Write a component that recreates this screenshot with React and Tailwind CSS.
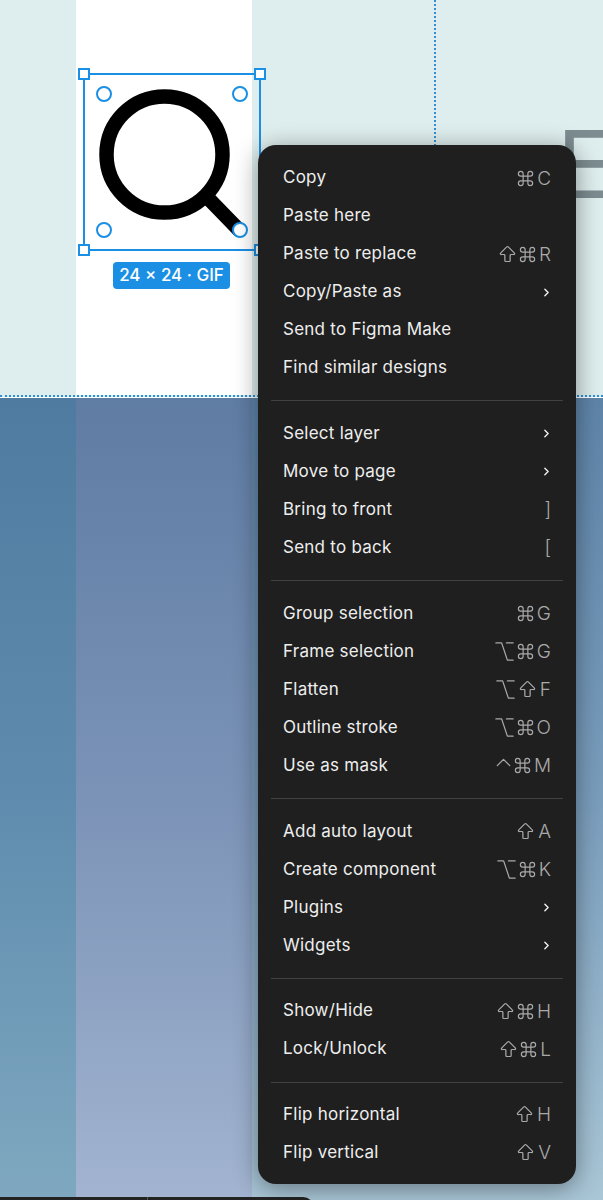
import { ArrowBigUp, ChevronRight, ChevronUp, Command, Option } from 'lucide-react';

const sections = [
  [
    ['Copy', ['cmd', 'C']],
    ['Paste here'],
    ['Paste to replace', ['shift', 'cmd', 'R']],
    ['Copy/Paste as', 'more'],
    ['Send to Figma Make'],
    ['Find similar designs'],
  ],
  [
    ['Select layer', 'more'],
    ['Move to page', 'more'],
    ['Bring to front', [']']],
    ['Send to back', ['[']],
  ],
  [
    ['Group selection', ['cmd', 'G']],
    ['Frame selection', ['opt', 'cmd', 'G']],
    ['Flatten', ['opt', 'shift', 'F']],
    ['Outline stroke', ['opt', 'cmd', 'O']],
    ['Use as mask', ['ctrl', 'cmd', 'M']],
  ],
  [
    ['Add auto layout', ['shift', 'A']],
    ['Create component', ['opt', 'cmd', 'K']],
    ['Plugins', 'more'],
    ['Widgets', 'more'],
  ],
  [
    ['Show/Hide', ['shift', 'cmd', 'H']],
    ['Lock/Unlock', ['shift', 'cmd', 'L']],
  ],
  [
    ['Flip horizontal', ['shift', 'H']],
    ['Flip vertical', ['shift', 'V']],
  ],
];

function Key({ k }) {
  if (k === 'cmd') return <Command size={19} strokeWidth={1.5} />;
  if (k === 'shift') return <ArrowBigUp size={21} strokeWidth={1.4} />;
  if (k === 'opt') return <Option size={23} strokeWidth={1.3} />;
  if (k === 'ctrl') return <ChevronUp size={25} strokeWidth={1.2} className="-mx-[3px] -mt-[6px]" />;
  return <span className="ml-[2px] text-[19px] font-light leading-none">{k}</span>;
}

function Row({ label, right }) {
  return (
    <div className="flex h-[38px] items-center justify-between px-[25px]">
      <span className="text-[17px] font-normal tracking-[0.25px] text-[#eeeeee]">{label}</span>
      {right === 'more' ? (
        <ChevronRight size={13} strokeWidth={2.6} className="-mr-[2px] text-[#f0f0f0]" />
      ) : right ? (
        <span className="flex items-center text-[#aaaaaa]">
          {right.map((k, i) => (
            <Key key={i} k={k} />
          ))}
        </span>
      ) : null}
    </div>
  );
}

function Handle() {
  return <div className="h-3 w-3 border-2 border-[#1a8fe3] bg-white" />;
}

function Dot() {
  return <div className="h-[16px] w-[16px] rounded-full border-2 border-[#1a8fe3] bg-white" />;
}

export default function App() {
  return (
    <div className="relative h-[1200px] w-[603px] overflow-hidden font-['Inter',sans-serif]">
      {/* canvas */}
      <div className="flex h-[397px] border-b-2 border-dotted border-[#2e8fd6] bg-[#deeded]">
        <div className="w-[76px]" />
        <div className="w-[176px] bg-white pl-[7px] pt-[73px]">
          {/* selected icon */}
          <div className="relative h-[178px] w-[178px] border-2 border-[#1a8fe3]">
            <svg className="absolute -inset-[2px]" width="178" height="178" viewBox="83 73 178 178" fill="none">
              <circle cx="164.5" cy="154.5" r="58" stroke="#000" strokeWidth="14.5" />
              <path d="M206 196 L239 230" stroke="#000" strokeWidth="14.5" strokeLinecap="round" />
            </svg>
            <div className="absolute inset-[11px] flex flex-col justify-between">
              <div className="flex justify-between">
                <Dot />
                <Dot />
              </div>
              <div className="flex justify-between">
                <Dot />
                <Dot />
              </div>
            </div>
            <div className="absolute -inset-[7px] flex flex-col justify-between">
              <div className="flex justify-between">
                <Handle />
                <Handle />
              </div>
              <div className="flex justify-between">
                <Handle />
                <Handle />
              </div>
            </div>
          </div>
          <div className="ml-[30px] mt-[11px] flex h-[27px] w-[117px] items-center justify-center rounded-[4px] bg-[#1a8fe3] text-[17px] font-medium text-white">
            24 × 24 · GIF
          </div>
        </div>
        <div className="flex flex-1 overflow-hidden">
          <div className="ml-[182px] h-[146px] border-l-2 border-dotted border-[#2e8fd6]" />
          <span className="ml-[121px] mt-[108px] h-[112px] text-[93px] leading-[112px] text-[#7c8c90]">E</span>
        </div>
      </div>
      <div className="flex h-[803px] border-t border-white bg-gradient-to-b from-[#5e84a8] via-[#7a9dbc] to-[#a9c6d6]">
        <div className="w-[76px] bg-gradient-to-b from-[#4e7b9f] via-[#5f8cae] to-[#7fa8c0]" />
        <div className="w-[176px] bg-gradient-to-b from-[#5f7ca3] via-[#7b93b7] to-[#a2b4d0]" />
      </div>

      {/* bottom toolbar peeking in */}
      <div className="absolute -bottom-[8px] left-0 flex h-[11px] w-[314px] rounded-tr-[14px] bg-[#232323]">
        <div className="w-[148px] border-r border-[#555]" />
      </div>

      {/* context menu */}
      <div className="absolute left-[258px] top-[145px] w-[318px] rounded-[18px] bg-[#1f1f1f] pb-[12px] pt-[14px] shadow-[0_4px_24px_rgba(0,0,0,0.4)]">
        {sections.map((rows, i) => (
          <div key={i}>
            {i > 0 && <div className="mx-[13px] my-[13.4px] h-px bg-[#414141]" />}
            {rows.map(([label, right]) => (
              <Row key={label} label={label} right={right} />
            ))}
          </div>
        ))}
      </div>
    </div>
  );
}
